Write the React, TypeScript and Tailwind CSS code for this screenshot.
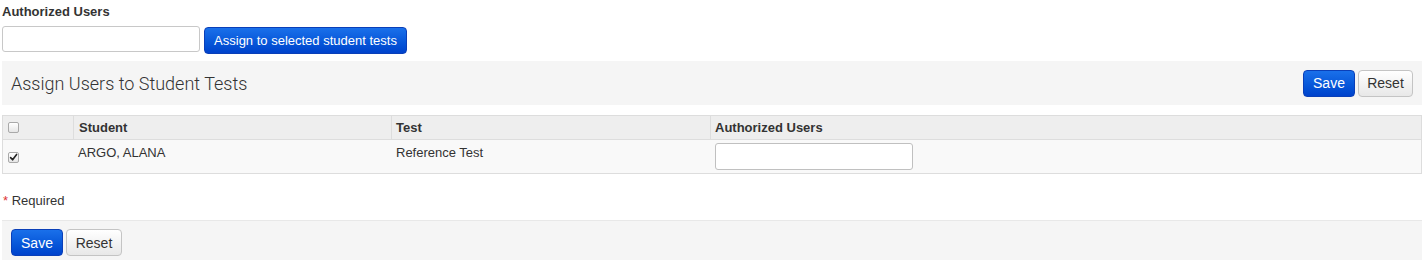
import React from "react";

const font = { fontFamily: '"Liberation Sans", Arial, sans-serif' };

function Check({ checked }: { checked?: boolean }) {
  return (
    <span className="inline-flex h-[11px] w-[11px] items-center justify-center rounded-[2px] border border-[#a9a9a9] bg-gradient-to-b from-[#ffffff] to-[#e6e6e6] shadow-[inset_0_1px_0_#fff]">
      {checked && (
        <svg width="9" height="9" viewBox="0 0 9 9">
          <path d="M1.6 4.6 L3.6 6.8 L7.6 1.4" fill="none" stroke="#222" strokeWidth="1.6" strokeLinecap="round" strokeLinejoin="round" />
        </svg>
      )}
    </span>
  );
}

function BlueBtn({ children, cls = "" }: { children: React.ReactNode; cls?: string }) {
  return (
    <button className={"rounded-[4px] border border-[#0a3fb8] bg-gradient-to-b from-[#1a70ea] to-[#0042cc] leading-none text-white " + cls}>
      {children}
    </button>
  );
}

function GrayBtn({ children, cls = "" }: { children: React.ReactNode; cls?: string }) {
  return (
    <button className={"rounded-[4px] border border-[#c4c4c4] bg-gradient-to-b from-[#ffffff] to-[#e8e8e8] leading-none text-[#333] " + cls}>
      {children}
    </button>
  );
}

export default function App() {
  return (
    <div className="h-[260px] w-[1424px] overflow-hidden bg-white px-[2px] text-[#333]" style={font}>
      <div className="pt-[4px] text-[13px] font-bold leading-[16px]">Authorized Users</div>
      <div className="mt-[6px] flex items-start">
        <input className="h-[26px] w-[198px] rounded-[3px] border border-[#c8c8c8] bg-white outline-none" />
        <BlueBtn cls="ml-[4px] mt-[1px] h-[27px] w-[203px] text-[13px]">Assign to selected student tests</BlueBtn>
      </div>

      <div className="mt-[7px] flex h-[44px] items-center justify-between bg-[#f5f5f5] pl-[9px] pr-[9px]">
        <div className="text-[18px] font-light text-[#333]" style={{ fontFamily: '"Helvetica Neue", Roboto, "Liberation Sans", sans-serif' }}>
          Assign Users to Student Tests
        </div>
        <div className="flex items-center gap-[3px]">
          <BlueBtn cls="h-[27px] w-[52px] text-[14px]">Save</BlueBtn>
          <GrayBtn cls="h-[27px] w-[55px] text-[14px]">Reset</GrayBtn>
        </div>
      </div>

      <div className="mt-[10px] border border-[#dddddd] text-[13px]">
        <div className="grid h-[24px] grid-cols-[71px_318px_319px_1fr] border-b border-[#dddddd] bg-[#eeeeee] font-bold">
          <div className="flex items-center border-r border-[#dddddd] pl-[5px]"><Check /></div>
          <div className="flex items-center border-r border-[#dddddd] pl-[5px]">Student</div>
          <div className="flex items-center border-r border-[#dddddd] pl-[4px]">Test</div>
          <div className="flex items-center pl-[4px]">Authorized Users</div>
        </div>
        <div className="grid h-[33px] grid-cols-[71px_318px_319px_1fr] bg-[#f9f9f9]">
          <div className="pl-[5px] pt-[8px]"><Check checked /></div>
          <div className="pl-[4px] pt-[3px]">ARGO, ALANA</div>
          <div className="pl-[4px] pt-[3px]">Reference Test</div>
          <div className="pl-[4px] pt-[3px]">
            <input className="h-[27px] w-[198px] rounded-[3px] border border-[#c0c0c0] bg-white outline-none" />
          </div>
        </div>
      </div>

      <div className="mt-[19px] pl-[1px] text-[13px] leading-[16px]">
        <span className="text-[#d33]">*</span> Required
      </div>

      <div className="mt-[11px] h-[41px] border-t border-[#e8e8e8] bg-[#f5f5f5] pl-[9px] pt-[8px]">
        <div className="flex gap-[3px]">
          <BlueBtn cls="h-[27px] w-[52px] text-[14px]">Save</BlueBtn>
          <GrayBtn cls="h-[27px] w-[56px] text-[14px]">Reset</GrayBtn>
        </div>
      </div>
    </div>
  );
}
